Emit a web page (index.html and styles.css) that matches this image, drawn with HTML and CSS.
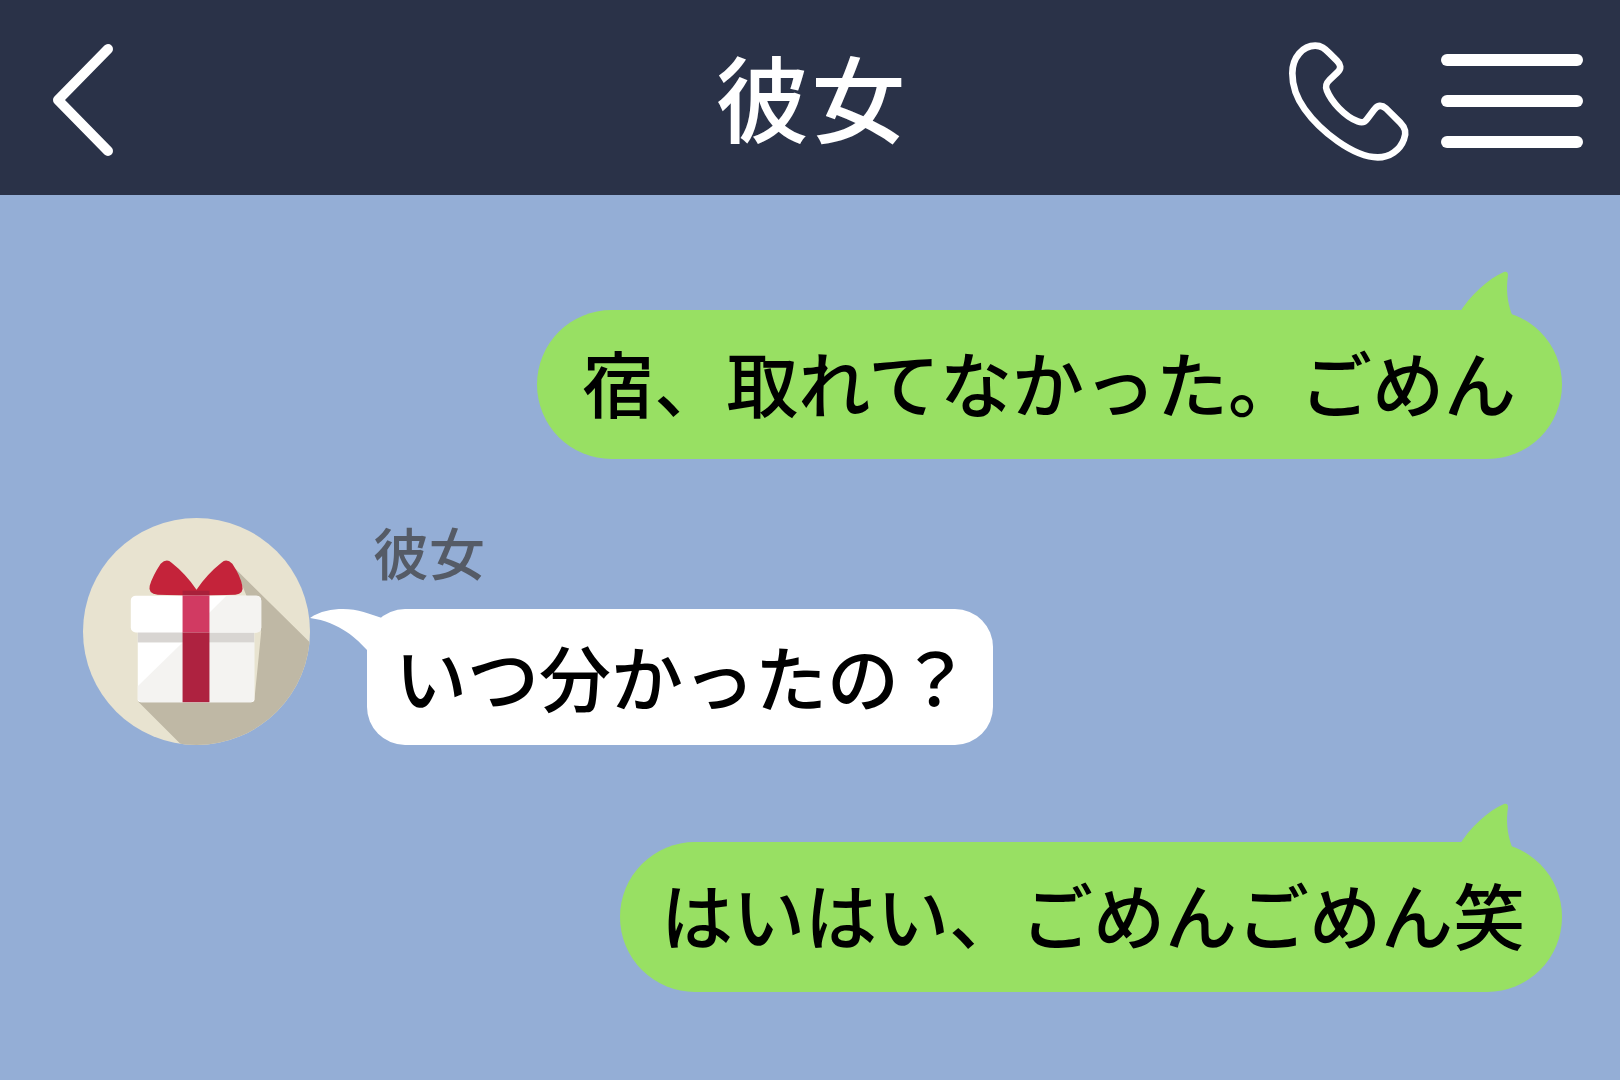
FILE: index.html
```html
<!DOCTYPE html>
<html lang="ja">
<head>
<meta charset="utf-8">
<title>彼女</title>
<link rel="stylesheet" href="styles.css">
</head>
<body>
<header class="topbar">
  <svg class="back" viewBox="0 0 62 112" aria-hidden="true"><path d="M56 5 L6 56 L56 107"/></svg>
  <h1 class="title">彼女</h1>
  <div class="actions">
    <svg class="phone" viewBox="110 60 380 370" aria-hidden="true"><path d="M197 77 C215 77 225 85 240 100 L262 122 C274 134 276 146 264 157 L240 180 C230 190 226 198 232 212 C245 245 285 290 325 305 C340 311 347 306 353 298 L374 270 C384 256 396 254 410 266 L452 308 C468 324 472 338 464 358 C452 392 420 413 385 413 C345 413 305 393 265 365 C225 337 190 303 165 268 C140 233 128 200 128 160 C128 112 160 77 197 77 Z"/></svg>
    <div class="menu"><span></span><span></span><span></span></div>
  </div>
</header>
<main class="chat">
  <div class="bubble mine first">宿、取れてなかった。ごめん<svg class="tail-right" viewBox="0 0 54 44" aria-hidden="true"><path d="M0 44 C12 24 30 8 46 1 C49 0 50 2 50 4 C48 18 49 30 54 44 Z"/></svg></div>
  <div class="incoming">
    <svg class="avatar" viewBox="83 518 228 228" aria-hidden="true">
      <defs><clipPath id="disc"><circle cx="197" cy="632" r="114"/></clipPath></defs>
      <circle cx="197" cy="632" r="114" fill="#e8e3d0"/>
      <polygon clip-path="url(#disc)" fill="#bfb8a5" points="236,569 320,652 320,760 196,760 138,702 255,702 262,632"/>
      <path fill="#c4233a" d="M161 564 Q167 558 172 563 Q186 574 197 590 Q208 574 222 563 Q227 558 233 564 Q241 576 243 586 Q245 594 236 595 L197 596 L158 595 Q148 594 150 586 Q153 576 161 564 Z"/>
      <rect x="183" y="591" width="27" height="5" fill="#a8203a"/>
      <rect x="138" y="630" width="117" height="73" rx="3" fill="#fff"/>
      <polygon fill="#f4f3f1" points="138,687 183,643 255,643 255,700 252,703 141,703 138,700"/>
      <rect x="138" y="632" width="117" height="11" fill="#d8d5d2"/>
      <rect x="131" y="596" width="131" height="37" rx="5" fill="#fff"/>
      <path fill="#f4f3f1" d="M227 596 H257 Q262 596 262 601 V628 Q262 633 257 633 H190 Z"/>
      <rect x="183" y="596" width="27" height="37" fill="#d13a62"/>
      <rect x="183" y="633" width="27" height="70" fill="#ae2240"/>
    </svg>
    <div class="message">
      <div class="sender">彼女</div>
      <div class="bubble theirs">いつ分かったの？<svg class="tail-left" viewBox="0 0 72 42" aria-hidden="true"><path d="M0 10 C10 3 22 1 33 1 C48 1 60 6 72 10 V42 H57 C48 32 30 14 0 10 Z"/></svg></div>
    </div>
  </div>
  <div class="bubble mine last">はいはい、ごめんごめん笑<svg class="tail-right" viewBox="0 0 54 44" aria-hidden="true"><path d="M0 44 C12 24 30 8 46 1 C49 0 50 2 50 4 C48 18 49 30 54 44 Z"/></svg></div>
</main>
</body>
</html>
```
FILE: styles.css
```css
* { box-sizing: border-box; }
html, body { margin: 0; height: 100%; }
body {
  width: 1620px;
  height: 1080px;
  overflow: hidden;
  background: #94aed6;
  font-family: "Noto Sans CJK JP", "Noto Sans", sans-serif;
  color: #000;
}
.topbar {
  height: 195px;
  background: #2a3248;
  display: grid;
  grid-template-columns: 1fr auto 1fr;
  align-items: center;
  padding: 5px 37px 0 52px;
}
.back { width: 62px; height: 112px; }
.back path { fill: none; stroke: #fff; stroke-width: 10; stroke-linecap: round; stroke-linejoin: round; }
.title {
  margin: -11px 0 0 -12px;
  color: #fff;
  font-size: 94px;
  font-weight: 500;
  line-height: 1;
  letter-spacing: 2px;
}
.actions { display: flex; justify-content: flex-end; align-items: center; gap: 28px; }
.phone { width: 127px; height: 123px; margin-top: 2px; }
.phone path { fill: none; stroke: #fff; stroke-width: 20; stroke-linejoin: round; }
.menu { display: flex; flex-direction: column; gap: 29px; width: 142px; margin-top: 1px; }
.menu span { display: block; height: 12px; background: #fff; border-radius: 6px; }
.chat { display: flex; flex-direction: column; align-items: flex-end; padding: 115px 58px 0 83px; }
.bubble {
  position: relative;
  white-space: nowrap;
  font-weight: 500;
  font-size: 72px;
  line-height: 1;
}
.mine { background: #98e063; border-radius: 75px; height: 149px; padding: 35px 46px 0 45px; }
.last { margin-top: 97px; height: 150px; padding-top: 35px; padding-left: 41px; padding-right: 37px; }
.tail-right { position: absolute; right: 50px; top: -39px; width: 54px; height: 44px; }
.tail-right path { fill: #98e063; }
.incoming { align-self: flex-start; display: flex; gap: 57px; margin-top: 59px; }
.avatar { width: 227px; height: 227px; flex: none; }
.message { display: flex; flex-direction: column; align-items: flex-start; }
.sender { font-size: 56px; font-weight: 500; line-height: 1; color: #555b66; margin: 5px 0 28px 6px; height: 58px; }
.theirs { background: #fff; border-radius: 38px; height: 136px; padding: 30px 22px 0 28px; }
.tail-left { position: absolute; left: -57px; top: -1px; width: 72px; height: 42px; }
.tail-left path { fill: #fff; }
```
